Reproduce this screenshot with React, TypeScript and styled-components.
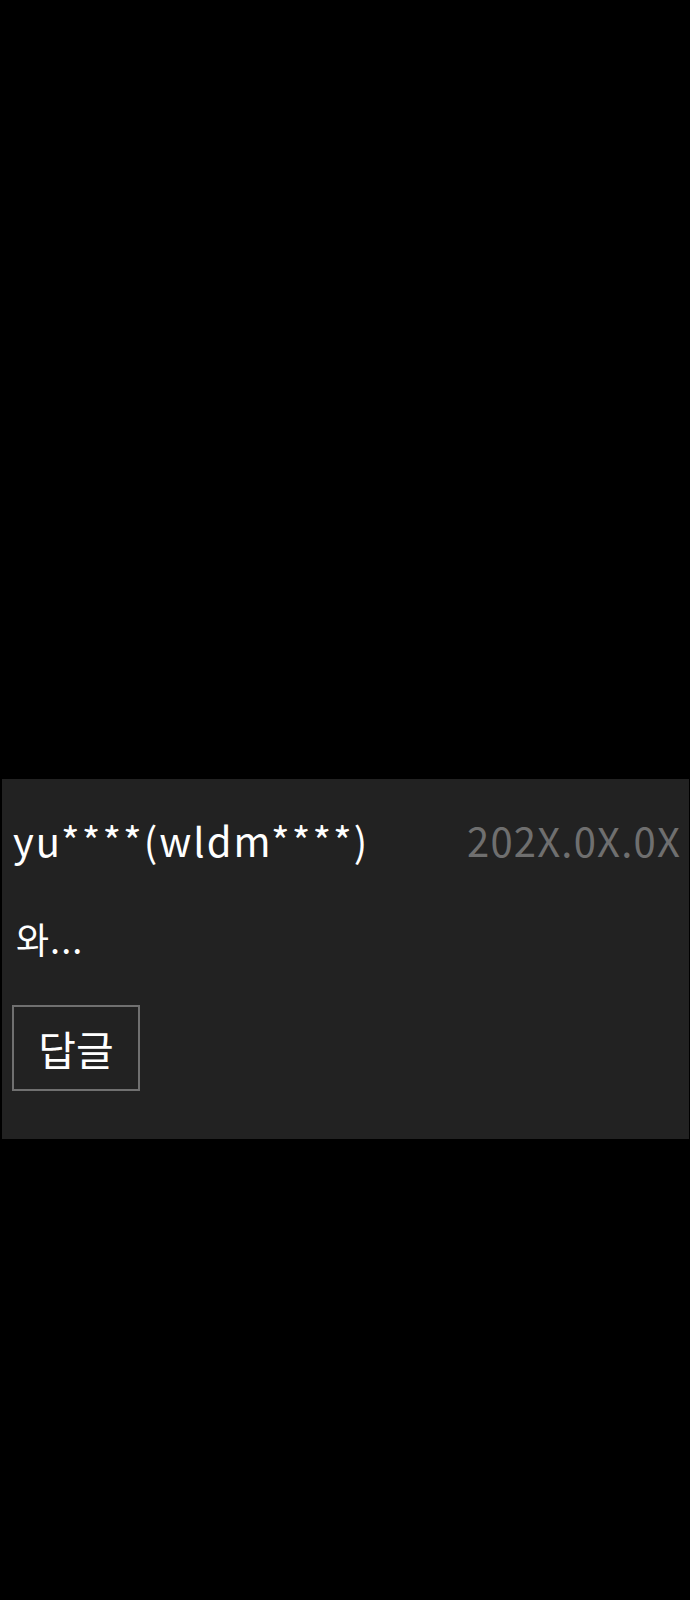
import React, { FC } from 'react';
import styled, { createGlobalStyle } from 'styled-components';

interface Comment {
  author: string;
  date: string;
  body: string;
}

const comment: Comment = {
  author: 'yu****(wldm****)',
  date: '202X.0X.0X',
  body: '와...',
};

const GlobalStyle = createGlobalStyle`
  html, body {
    margin: 0;
    padding: 0;
    background: #000;
  }
  body {
    font-family: "Noto Sans CJK KR", "Noto Sans", sans-serif;
    color: #fff;
  }
`;

const CommentCard: FC<{ data: Comment }> = ({ data }) => (
  <Card>
    <Header>
      <Author>{data.author}</Author>
      <DateText>{data.date}</DateText>
    </Header>
    <Body>{data.body}</Body>
    <ReplyButton type="button">답글</ReplyButton>
  </Card>
);

export default function App() {
  return (
    <>
      <GlobalStyle />
      <Page>
        <Spacer />
        <CommentCard data={comment} />
      </Page>
    </>
  );
}

const Page = styled.div`
  width: 690px;
  min-height: 1600px;
  background: #000;
  padding: 0 1px 0 2px;
  box-sizing: border-box;
`;

const Spacer = styled.div`
  height: 779px;
`;

const Card = styled.section`
  height: 360px;
  box-sizing: border-box;
  background: #222222;
  padding: 37px 8px 0 11px;
  display: flex;
  flex-direction: column;
  align-items: flex-start;
`;

const Header = styled.div`
  align-self: stretch;
  display: flex;
  justify-content: space-between;
  align-items: baseline;
`;

const Author = styled.span`
  font-size: 40px;
  line-height: 48px;
  letter-spacing: 2px;
  color: #ffffff;
`;

const DateText = styled.span`
  font-size: 40px;
  line-height: 48px;
  letter-spacing: 1.2px;
  color: #6f6f6f;
`;

const Body = styled.p`
  margin: 54px 0 0 3px;
  font-size: 36px;
  line-height: 40px;
  letter-spacing: 1px;
  color: #ffffff;
`;

const ReplyButton = styled.button`
  margin: 47px 0 0 -1px;
  width: 128px;
  height: 86px;
  box-sizing: border-box;
  border: 2px solid #707070;
  background: transparent;
  color: #ffffff;
  font-family: "Noto Sans CJK KR", "Noto Sans", sans-serif;
  font-size: 41px;
  padding: 0;
  display: flex;
  align-items: center;
  justify-content: center;
`;
